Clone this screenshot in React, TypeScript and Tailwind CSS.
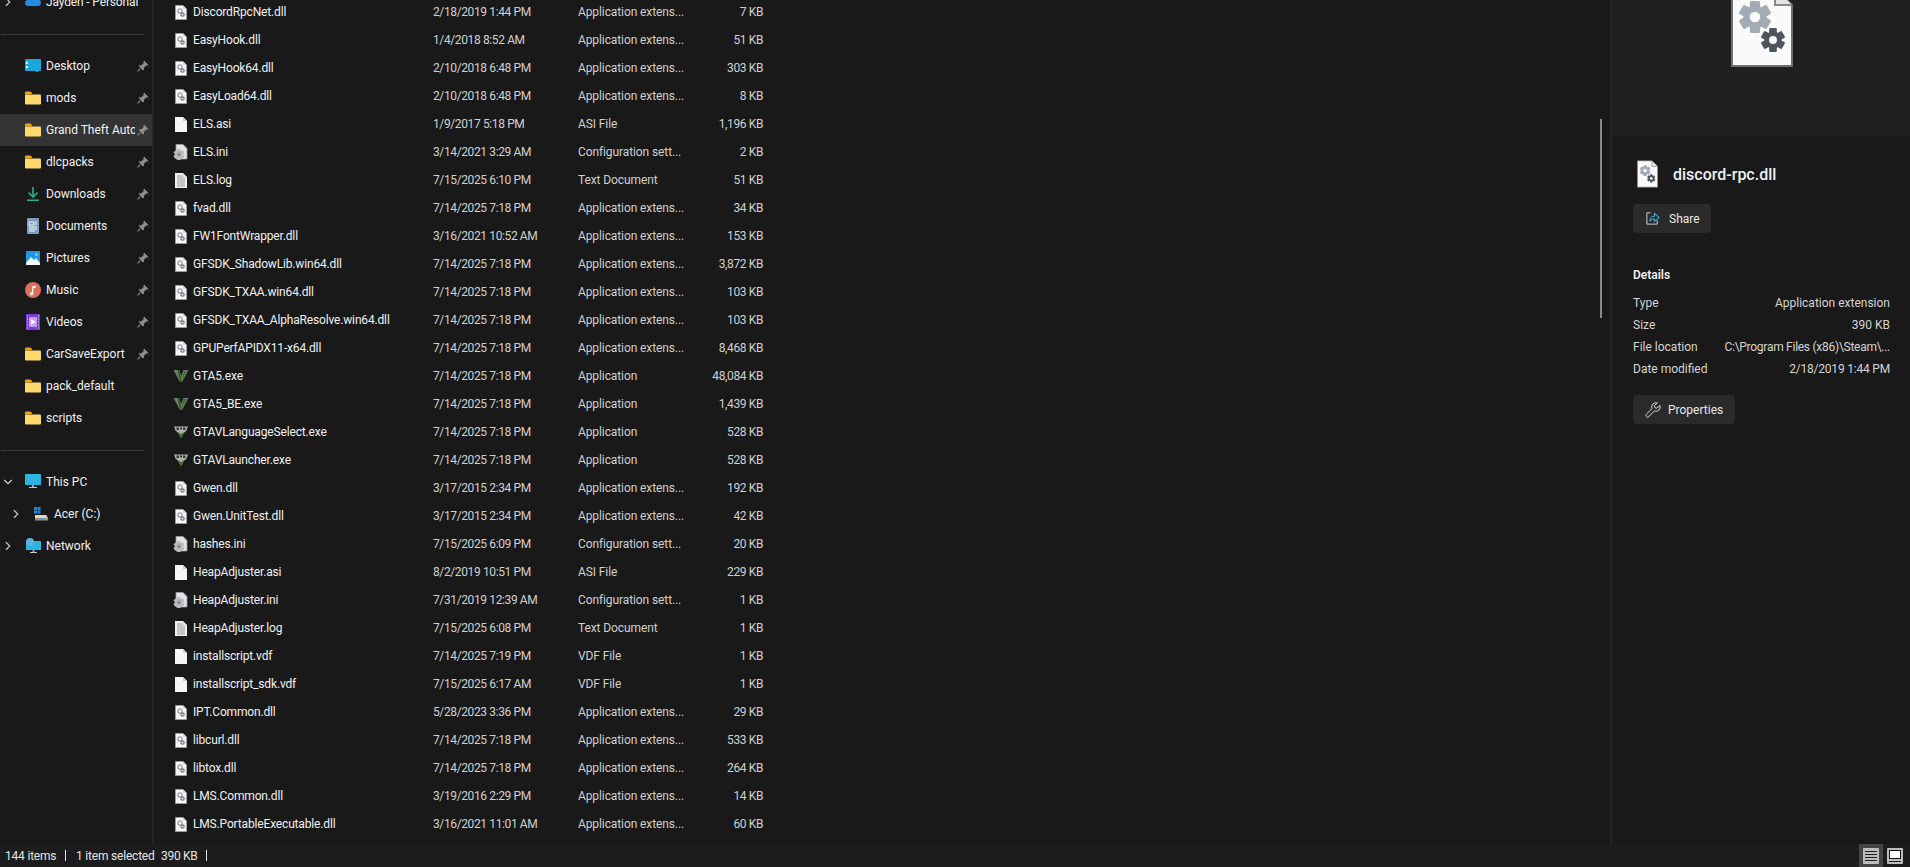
import React from "react";
import { ChevronRight, ChevronDown } from "lucide-react";

const font = "font-['Roboto','Open_Sans',sans-serif]";

function Gear({ cx, cy, r, fill, hole = "#fafafa" }: { cx: number; cy: number; r: number; fill: string; hole?: string }) {
  const teeth = Array.from({ length: 6 }, (_, i) => i * 60);
  return (
    <g>
      {teeth.map((a) => (
        <rect key={a} x={cx - r * 0.32} y={cy - r} width={r * 0.64} height={r * 0.6} rx={r * 0.1} fill={fill} transform={`rotate(${a} ${cx} ${cy})`} />
      ))}
      <circle cx={cx} cy={cy} r={r * 0.72} fill={fill} />
      <circle cx={cx} cy={cy} r={r * 0.33} fill={hole} />
    </g>
  );
}

function DllIcon({ className }: { className?: string }) {
  return (
    <svg viewBox="0 0 62 80" className={className}>
      <path d="M1 1H44L61 18V79H1Z" fill="#fafafa" stroke="#6f6f6f" strokeWidth="2" />
      <path d="M44 1V18H61" fill="#e4e4e4" stroke="#8a8a8a" strokeWidth="2" />
      <Gear cx={24} cy={30} r={16} fill="#a3abb5" />
      <Gear cx={42} cy={53} r={12} fill="#4e555b" />
    </svg>
  );
}

function SmallDll() {
  return (
    <svg viewBox="0 0 12 15" className="w-3 h-[15px] shrink-0">
      <path d="M.5 .5H8L11.5 4V14.5H.5Z" fill="#f6f6f6" stroke="#9a9a9a" strokeWidth="1" />
      <path d="M8 .5V4H11.5" fill="#d8d8d8" />
      <circle cx="5" cy="6" r="2.1" fill="none" stroke="#a4a9b0" strokeWidth="1.5" />
      <circle cx="7.6" cy="9.6" r="1.6" fill="none" stroke="#767c82" strokeWidth="1.3" />
    </svg>
  );
}

function BlankIcon() {
  return (
    <svg viewBox="0 0 12 15" className="w-3 h-[15px] shrink-0">
      <path d="M0 0H8L12 4V15H0Z" fill="#f5f5f5" />
      <path d="M8 0V4H12" fill="#cfcfcf" />
    </svg>
  );
}

function LogIcon() {
  return (
    <svg viewBox="0 0 12 15" className="w-3 h-[15px] shrink-0">
      <path d="M0 0H8L12 4V15H0Z" fill="#efefef" />
      <path d="M2 3H8M2 5H10M2 7H10M2 9H10M2 11H10M2 13H10" stroke="#8a8a8a" strokeWidth="0.8" />
    </svg>
  );
}

function IniIcon() {
  return (
    <svg viewBox="0 0 15 16" className="w-[15px] h-4 -ml-[2px] shrink-0">
      <path d="M3 0.5H10L14 4.5V15H3Z" fill="#e4e4e4" stroke="#9a9a9a" strokeWidth="0.8" />
      <Gear cx={6} cy={10.5} r={5.5} fill="#b8babd" hole="#8a8a8a" />
    </svg>
  );
}

function GtaIcon({ lang }: { lang?: boolean }) {
  return (
    <svg viewBox="0 0 16 14" className="w-4 h-[14px] -ml-[2px] shrink-0">
      {lang ? (
        <>
          <path d="M1 1.5H15L13.5 5.5L9.5 9H6.5L2.5 5.5Z" fill="#b0b0b0" />
          <path d="M3.5 2.5H6V5H3.5ZM7 2.5H9V4.5H7ZM10 2.5H12.5V5H10Z" fill="#3a3a3a" />
          <path d="M4.5 7.5L8 13.5L11.5 7.5L9.5 7.5L8 10L6.5 7.5Z" fill="#4d7a35" />
        </>
      ) : (
        <>
          <path d="M0.5 1H6L8.5 7L10.5 1H15.5L9 13H7Z" fill="#6f7d68" />
          <path d="M4.5 1H6.5L8 8L8.5 13H7.2Z" fill="#2a5f20" />
          <path d="M11 2H13.5L8.5 12Z" fill="#39702b" />
        </>
      )}
    </svg>
  );
}

function Folder() {
  return (
    <svg viewBox="0 0 16 14" className="w-4 h-[14px]">
      <path d="M0 1.5A1 1 0 0 1 1 .5H5.5L7.5 2.5H0Z" fill="#e8a317" />
      <path d="M0 3.5H15A1 1 0 0 1 16 4.5V12.5A1 1 0 0 1 15 13.5H1A1 1 0 0 1 0 12.5Z" fill="#fdd96d" />
      <path d="M0 2H7L6 3.5H0Z" fill="#e8a317" />
    </svg>
  );
}

function PinIcon() {
  return (
    <svg viewBox="0 0 11 11" className="w-3 h-3 shrink-0">
      <path d="M6.5 0.5L10.5 4.5L9.6 5.2L8.6 5L6.4 7.2L6.4 9L5.4 9.6L1.6 5.6L2.2 4.7L4 4.7L6.2 2.5L5.9 1.4Z" fill="#8c8c8c" />
      <path d="M3 7.8L0.5 10.5" stroke="#8c8c8c" strokeWidth="1" />
    </svg>
  );
}

function NavIcon({ kind }: { kind: string }) {
  switch (kind) {
    case "desktop":
      return (
        <svg viewBox="0 0 16 14" className="w-4 h-[14px]">
          <rect width="16" height="12" y="0" rx="1" fill="#1ba6dd" />
          <rect x="1" y="3" width="2" height="2" fill="#e6f6fc" />
          <rect x="1" y="7" width="2" height="2" fill="#e6f6fc" />
          <rect x="11" y="12" width="2" height="1" fill="#1ba6dd" />
        </svg>
      );
    case "download":
      return (
        <svg viewBox="0 0 16 16" className="w-4 h-4">
          <path d="M8 1V10M3.5 6.5L8 11L12.5 6.5" fill="none" stroke="#27b383" strokeWidth="1.6" />
          <rect x="2" y="13.5" width="12" height="1.5" fill="#27b383" />
        </svg>
      );
    case "documents":
      return (
        <svg viewBox="0 0 14 16" className="w-[14px] h-4">
          <rect width="12" height="16" x="1" rx="1" fill="#7f9cc0" />
          <path d="M3 4H8V7H3ZM9 4H11M9 6H11M3 9H11M3 11H11M3 13H9" stroke="#f1f5f9" strokeWidth="1" fill="none" />
        </svg>
      );
    case "pictures":
      return (
        <svg viewBox="0 0 16 16" className="w-4 h-4">
          <rect width="14" height="14" x="1" y="1" rx="1" fill="#1f95e6" />
          <path d="M1 13L6 7L9 10L11 8L15 13V15H1Z" fill="#f3f8fc" />
          <circle cx="11.5" cy="4.5" r="1.2" fill="#9fd7fb" />
        </svg>
      );
    case "music":
      return (
        <svg viewBox="0 0 16 16" className="w-4 h-4">
          <circle cx="8" cy="8" r="8" fill="#d9705a" />
          <path d="M7 11V4.5L11 3.5V5.5L8.4 6.2V11.5A1.8 1.8 0 1 1 7 10Z" fill="#f9ece8" />
        </svg>
      );
    case "videos":
      return (
        <svg viewBox="0 0 16 16" className="w-4 h-4">
          <rect width="14" height="16" x="1" rx="1" fill="#7a3fd0" />
          <rect x="4" y="3" width="8" height="10" fill="#c69af0" />
          <path d="M6 5L11 8L6 11Z" fill="#fff" />
          <path d="M2 2H3M2 5H3M2 8H3M2 11H3M2 14H3M13 2H14M13 5H14M13 8H14M13 11H14M13 14H14" stroke="#e4d5f7" strokeWidth="1" />
        </svg>
      );
    case "pc":
      return (
        <svg viewBox="0 0 16 16" className="w-4 h-4">
          <rect width="16" height="11" rx="0.5" fill="#2bb5e0" />
          <rect x="7" y="11" width="2" height="2" fill="#8fa3ad" />
          <rect x="4" y="13" width="8" height="1" fill="#c2ccd2" />
        </svg>
      );
    case "drive":
      return (
        <svg viewBox="0 0 16 16" className="w-4 h-4">
          <rect x="1" y="1" width="3" height="3" fill="#1e88e5" />
          <rect x="4.5" y="1" width="3" height="3" fill="#1e88e5" />
          <rect x="1" y="4.5" width="3" height="3" fill="#1e88e5" />
          <rect x="4.5" y="4.5" width="3" height="3" fill="#1e88e5" />
          <path d="M2 9H13L15 12H2Z" fill="#d8d8d8" />
          <rect x="2" y="12" width="13" height="2.5" fill="#8f8f8f" />
          <rect x="12" y="12.5" width="1.5" height="1" fill="#7fd66a" />
        </svg>
      );
    case "network":
      return (
        <svg viewBox="0 0 16 16" className="w-4 h-4">
          <rect y="3" x="1" width="15" height="9" rx="0.5" fill="#2bb5e0" />
          <circle cx="5" cy="4" r="4" fill="#5cb1e6" />
          <rect x="7.5" y="12" width="2" height="2" fill="#8fa3ad" />
          <rect x="5" y="14" width="7" height="1" fill="#c2ccd2" />
        </svg>
      );
    default:
      return <Folder />;
  }
}

const nav: [string, string, boolean][] = [
  ["Desktop", "desktop", true],
  ["mods", "folder", true],
  ["Grand Theft Auto V", "folder", true],
  ["dlcpacks", "folder", true],
  ["Downloads", "download", true],
  ["Documents", "documents", true],
  ["Pictures", "pictures", true],
  ["Music", "music", true],
  ["Videos", "videos", true],
  ["CarSaveExport", "folder", true],
  ["pack_default", "folder", false],
  ["scripts", "folder", false],
];

const APP = "Application extens...";
const CFG = "Configuration sett...";
const rows: [string, string, string, string, string][] = [
  ["dll", "DiscordRpcNet.dll", "2/18/2019 1:44 PM", APP, "7 KB"],
  ["dll", "EasyHook.dll", "1/4/2018 8:52 AM", APP, "51 KB"],
  ["dll", "EasyHook64.dll", "2/10/2018 6:48 PM", APP, "303 KB"],
  ["dll", "EasyLoad64.dll", "2/10/2018 6:48 PM", APP, "8 KB"],
  ["blank", "ELS.asi", "1/9/2017 5:18 PM", "ASI File", "1,196 KB"],
  ["ini", "ELS.ini", "3/14/2021 3:29 AM", CFG, "2 KB"],
  ["log", "ELS.log", "7/15/2025 6:10 PM", "Text Document", "51 KB"],
  ["dll", "fvad.dll", "7/14/2025 7:18 PM", APP, "34 KB"],
  ["dll", "FW1FontWrapper.dll", "3/16/2021 10:52 AM", APP, "153 KB"],
  ["dll", "GFSDK_ShadowLib.win64.dll", "7/14/2025 7:18 PM", APP, "3,872 KB"],
  ["dll", "GFSDK_TXAA.win64.dll", "7/14/2025 7:18 PM", APP, "103 KB"],
  ["dll", "GFSDK_TXAA_AlphaResolve.win64.dll", "7/14/2025 7:18 PM", APP, "103 KB"],
  ["dll", "GPUPerfAPIDX11-x64.dll", "7/14/2025 7:18 PM", APP, "8,468 KB"],
  ["gta", "GTA5.exe", "7/14/2025 7:18 PM", "Application", "48,084 KB"],
  ["gta", "GTA5_BE.exe", "7/14/2025 7:18 PM", "Application", "1,439 KB"],
  ["gtal", "GTAVLanguageSelect.exe", "7/14/2025 7:18 PM", "Application", "528 KB"],
  ["gtal", "GTAVLauncher.exe", "7/14/2025 7:18 PM", "Application", "528 KB"],
  ["dll", "Gwen.dll", "3/17/2015 2:34 PM", APP, "192 KB"],
  ["dll", "Gwen.UnitTest.dll", "3/17/2015 2:34 PM", APP, "42 KB"],
  ["ini", "hashes.ini", "7/15/2025 6:09 PM", CFG, "20 KB"],
  ["blank", "HeapAdjuster.asi", "8/2/2019 10:51 PM", "ASI File", "229 KB"],
  ["ini", "HeapAdjuster.ini", "7/31/2019 12:39 AM", CFG, "1 KB"],
  ["log", "HeapAdjuster.log", "7/15/2025 6:08 PM", "Text Document", "1 KB"],
  ["blank", "installscript.vdf", "7/14/2025 7:19 PM", "VDF File", "1 KB"],
  ["blank", "installscript_sdk.vdf", "7/15/2025 6:17 AM", "VDF File", "1 KB"],
  ["dll", "IPT.Common.dll", "5/28/2023 3:36 PM", APP, "29 KB"],
  ["dll", "libcurl.dll", "7/14/2025 7:18 PM", APP, "533 KB"],
  ["dll", "libtox.dll", "7/14/2025 7:18 PM", APP, "264 KB"],
  ["dll", "LMS.Common.dll", "3/19/2016 2:29 PM", APP, "14 KB"],
  ["dll", "LMS.PortableExecutable.dll", "3/16/2021 11:01 AM", APP, "60 KB"],
];

function FileIcon({ kind }: { kind: string }) {
  if (kind === "dll") return <SmallDll />;
  if (kind === "blank") return <BlankIcon />;
  if (kind === "log") return <LogIcon />;
  if (kind === "ini") return <IniIcon />;
  return <GtaIcon lang={kind === "gtal"} />;
}

function NavRow({ label, icon, pin }: { label: string; icon: string; pin: boolean }) {
  const active = label.startsWith("Grand");
  return (
    <div className={`flex items-center h-8 ${active ? "bg-[#333333]" : ""}`}>
      <div className="w-[25px] shrink-0" />
      <div className="w-4 shrink-0 flex justify-center"><NavIcon kind={icon} /></div>
      <div className="w-[89px] ml-[5px] shrink-0 overflow-hidden whitespace-nowrap text-[#f0f0f0]">{label}</div>
      {pin && <div className="ml-[2px]"><PinIcon /></div>}
    </div>
  );
}

export default function App() {
  return (
    <div className={`${font} h-[867px] w-[1910px] overflow-hidden flex flex-col bg-[#191919] text-[12px] text-[#f0f0f0]`}>
      <div className="flex h-[844px] overflow-hidden">
        <aside className="w-[152px] shrink-0 -mt-[14px]">
          <div className="flex items-center h-8">
            <ChevronRight size={14} className="ml-px text-[#c8c8c8] shrink-0" />
            <div className="w-[10px] shrink-0" />
            <svg viewBox="0 0 16 10" className="w-4 h-[10px] -mt-[2px] shrink-0">
              <path d="M3 10A3 3 0 0 1 3 4A4.5 4.5 0 0 1 11.5 3A3.5 3.5 0 0 1 13 10Z" fill="#1f8ee0" />
            </svg>
            <span className="ml-[5px] whitespace-nowrap text-[#f0f0f0] tracking-[-0.15px]">Jayden - Personal</span>
          </div>
          <div className="h-8 flex items-center">
            <div className="w-[143px] h-px ml-px bg-[#3a3a3a]" />
          </div>
          {nav.map(([l, i, p]) => (
            <NavRow key={l} label={l} icon={i} pin={p} />
          ))}
          <div className="h-8 flex items-center"><div className="w-[143px] h-px ml-px bg-[#3a3a3a]" /></div>
          <div className="flex items-center h-8">
            <ChevronDown size={14} className="ml-px text-[#c8c8c8] shrink-0" />
            <div className="w-[10px] shrink-0" />
            <NavIcon kind="pc" />
            <span className="ml-[5px]">This PC</span>
          </div>
          <div className="flex items-center h-8">
            <ChevronRight size={14} className="ml-[9px] text-[#c8c8c8] shrink-0" />
            <div className="w-[10px] shrink-0" />
            <NavIcon kind="drive" />
            <span className="ml-[5px]">Acer (C:)</span>
          </div>
          <div className="flex items-center h-8">
            <ChevronRight size={14} className="ml-px text-[#c8c8c8] shrink-0" />
            <div className="w-[10px] shrink-0" />
            <NavIcon kind="network" />
            <span className="ml-[5px]">Network</span>
          </div>
        </aside>
        <div className="w-[2px] bg-[#242424] shrink-0" />
        <main className="flex-1 relative overflow-hidden -mt-[2px]">
          {rows.map(([k, n, d, t, s]) => (
            <div key={n} className="h-7 flex items-center whitespace-nowrap text-[#f0f0f0]">
              <div className="w-[21px] shrink-0" />
              <div className="w-[18px] shrink-0 flex justify-start"><FileIcon kind={k} /></div>
              <div className="w-[240px] shrink-0 tracking-[-0.16px]">{n}</div>
              <div className="w-[145px] shrink-0 text-[#d0d0d0] tracking-[-0.38px]">{d}</div>
              <div className="w-[110px] shrink-0 text-[#d0d0d0] tracking-[-0.1px]">{t}</div>
              <div className="w-[75px] text-right shrink-0 text-[#d0d0d0] tracking-[-0.38px]">{s}</div>
            </div>
          ))}
          <div className="absolute left-[1446px] top-[121px] w-[2px] h-[199px] bg-[#8a8a8a]" />
        </main>
        <div className="w-[2px] bg-[#242424] shrink-0" />
        <section className="w-[298px] shrink-0">
          <div className="h-[136px] bg-[#202020] flex justify-center overflow-hidden">
            <DllIcon className="w-[62px] h-[80px] -mt-[13px] ml-[2px] shrink-0" />
          </div>
          <div className="pl-[21px] pr-[20px]">
            <div className="flex items-center mt-[24px] pl-[4px]">
              <DllIcon className="w-[21px] h-[28px] shrink-0" />
              <span className="ml-[15px] mt-px text-[16px] font-medium text-[#f0f0f0]">discord-rpc.dll</span>
            </div>
            <button className="flex items-center w-[78px] h-[29px] mt-[16px] rounded-[4px] bg-[#2a2a2a] pl-[12px]">
              <svg viewBox="0 0 16 16" className="w-[15px] h-[15px]">
                <path d="M6 2H2V14H13V10" fill="none" stroke="#d8d8d8" strokeWidth="1" />
                <path d="M5 11C5 7 8 5.5 10 5.5V2.5L15 7L10 11V8.5C8 8.5 6 9 5 11Z" fill="none" stroke="#47a8e8" strokeWidth="1.1" />
              </svg>
              <span className="ml-[9px] text-[#e8e8e8]">Share</span>
            </button>
            <div className="font-semibold mt-[32px] h-[20px] flex items-center">Details</div>
            <div className="mt-[7px] text-[#d4d4d4]">
              {[
                ["Type", "Application extension", "tracking-normal"],
                ["Size", "390 KB", "tracking-normal"],
                ["File location", "C:\\Program Files (x86)\\Steam\\...", "tracking-[-0.27px]"],
                ["Date modified", "2/18/2019 1:44 PM", "tracking-[-0.2px]"],
              ].map(([a, b, c]) => (
                <div key={a} className="flex justify-between h-[22px] items-center whitespace-nowrap">
                  <span>{a}</span>
                  <span className={c}>{b}</span>
                </div>
              ))}
            </div>
            <button className="flex items-center w-[102px] h-[29px] mt-[15px] rounded-[4px] bg-[#2a2a2a] pl-[12px]">
              <svg viewBox="0 0 16 16" className="w-4 h-4">
                <path d="M15 3.5L11.8 6.2L9.8 5.6L9.3 3.6L12.4 1A4.2 4.2 0 0 0 7 6.6L1.4 12.2A1.6 1.6 0 0 0 3.8 14.6L9.4 8.9A4.2 4.2 0 0 0 15 3.5Z" fill="none" stroke="#d8d8d8" strokeWidth="1" />
              </svg>
              <span className="ml-[7px] text-[#e8e8e8]">Properties</span>
            </button>
          </div>
        </section>
      </div>
      <footer className="h-[23px] bg-[#1c1c1c] flex items-center pl-[5px] text-[#e4e4e4] whitespace-nowrap">
        <span className="w-[50px] tracking-[-0.2px]">144 items</span>
        <span className="w-px h-[11px] bg-[#e4e4e4] ml-[10px]" />
        <span className="ml-[10px] w-[80px] tracking-[-0.2px]">1 item selected</span>
        <span className="ml-[5px] w-[36px] tracking-[-0.3px]">390 KB</span>
        <span className="w-px h-[11px] bg-[#e4e4e4] ml-[9px]" />
        <div className="ml-auto flex items-center h-full">
          <div className="w-6 h-full bg-[#454545] flex items-center justify-center">
            <svg viewBox="0 0 16 16" className="w-4 h-4">
              <rect width="16" height="16" rx="1" fill="#bdbdbd" />
              <path d="M2 3.5H14M2 6.5H14M2 9.5H14M2 12.5H14" stroke="#222" strokeWidth="1" />
            </svg>
          </div>
          <div className="w-[23px] h-full flex items-center justify-center mr-[4px]">
            <svg viewBox="0 0 16 16" className="w-4 h-4">
              <rect width="16" height="16" rx="1" fill="#bdbdbd" />
              <rect x="2.5" y="2.5" width="11" height="8" fill="#fff" stroke="#111" strokeWidth="1" />
              <path d="M2 13.5H14" stroke="#222" strokeWidth="1" />
            </svg>
          </div>
        </div>
      </footer>
    </div>
  );
}
